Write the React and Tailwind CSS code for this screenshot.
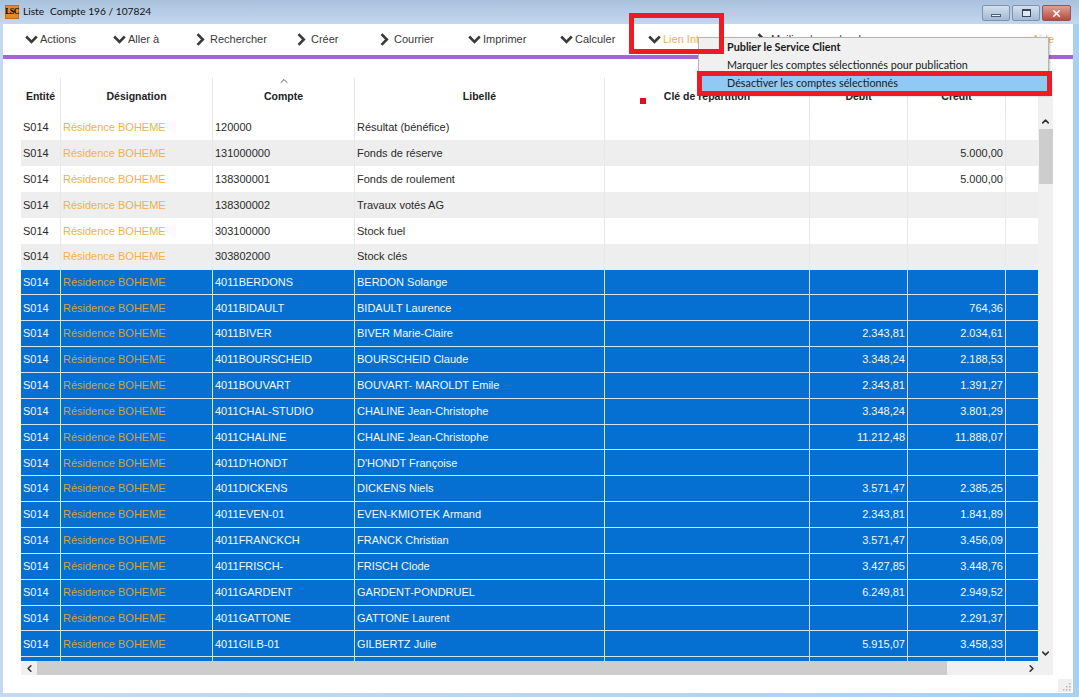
import React from 'react';
import { X, ChevronUp, ChevronDown, ChevronLeft, ChevronRight } from 'lucide-react';

const menus = [
  { label: 'Actions', open: true, w: 'w-[88px]' },
  { label: 'Aller à', open: true, w: 'w-[83px]' },
  { label: 'Rechercher', open: false, w: 'w-[101px]' },
  { label: 'Créer', open: false, w: 'w-[83px]' },
  { label: 'Courrier', open: false, w: 'w-[88px]' },
  { label: 'Imprimer', open: true, w: 'w-[92px]' },
  { label: 'Calculer', open: true, w: 'w-[88px]' },
  { label: 'Lien Int', open: true, w: 'w-[109px]', accent: true },
  { label: 'Mailing / sms / web', open: false, w: 'w-[270px]' },
];

const rows = [
  ['120000', 'Résultat (bénéfice)', '', ''],
  ['131000000', 'Fonds de réserve', '', '5.000,00'],
  ['138300001', 'Fonds de roulement', '', '5.000,00'],
  ['138300002', 'Travaux votés AG', '', ''],
  ['303100000', 'Stock fuel', '', ''],
  ['303802000', 'Stock clés', '', ''],
  ['4011BERDONS', 'BERDON Solange', '', ''],
  ['4011BIDAULT', 'BIDAULT Laurence', '', '764,36'],
  ['4011BIVER', 'BIVER Marie-Claire', '2.343,81', '2.034,61'],
  ['4011BOURSCHEID', 'BOURSCHEID Claude', '3.348,24', '2.188,53'],
  ['4011BOUVART', 'BOUVART- MAROLDT Emile', '2.343,81', '1.391,27'],
  ['4011CHAL-STUDIO', 'CHALINE Jean-Christophe', '3.348,24', '3.801,29'],
  ['4011CHALINE', 'CHALINE Jean-Christophe', '11.212,48', '11.888,07'],
  ["4011D'HONDT", "D'HONDT Françoise", '', ''],
  ['4011DICKENS', 'DICKENS Niels', '3.571,47', '2.385,25'],
  ['4011EVEN-01', 'EVEN-KMIOTEK Armand', '2.343,81', '1.841,89'],
  ['4011FRANCKCH', 'FRANCK Christian', '3.571,47', '3.456,09'],
  ['4011FRISCH-', 'FRISCH Clode', '3.427,85', '3.448,76'],
  ['4011GARDENT', 'GARDENT-PONDRUEL', '6.249,81', '2.949,52'],
  ['4011GATTONE', 'GATTONE Laurent', '', '2.291,37'],
  ['4011GILB-01', 'GILBERTZ Julie', '5.915,07', '3.458,33'],
];

const gridCols = 'grid grid-cols-[40px_152px_142px_250px_205px_98px_98px_32px]';

const DownIcon = () => (
  <svg viewBox="0 0 13 9" className="w-[13px] h-[9px] mr-[2px] shrink-0">
    <polyline points="1.2,1.5 6.5,6.8 11.8,1.5" fill="none" stroke="#3a3a3a" strokeWidth="2.6" />
  </svg>
);

const RightIcon = () => (
  <svg viewBox="0 0 9 13" className="w-[9px] h-[13px] mr-[5px] shrink-0">
    <polyline points="1.5,1.2 6.8,6.5 1.5,11.8" fill="none" stroke="#3a3a3a" strokeWidth="2.6" />
  </svg>
);

const Row = ({ row, index, blank }) => {
  const selected = index >= 6;
  const bg = selected ? 'bg-[#0570d2] text-[#f4f8fc]' : index % 2 === 1 ? 'bg-[#eeeeee] text-[#2a2a2a]' : 'bg-white text-[#2a2a2a]';
  const cell = `flex items-center border-r ${selected ? 'border-[#cfe4f7]' : 'border-[#e8e8e8]'}`;
  return (
    <div className={`${gridCols} h-[25.85px] shrink-0 text-[11px] ${bg} ${selected ? 'border-b border-[#cfe4f7]' : ''}`}>
      <div className={`${cell} pl-[2px]`}>{blank ? '' : 'S014'}</div>
      <div className={`${cell} pl-[2px] ${selected ? 'text-[#d3a23c]' : 'text-[#f5b04a]'}`}>{blank ? '' : 'Résidence BOHEME'}</div>
      <div className={`${cell} pl-[2px]`}>{row[0]}</div>
      <div className={`${cell} pl-[2px]`}>{row[1]}</div>
      <div className={cell}></div>
      <div className={`${cell} justify-end pr-[2px]`}>{row[2]}</div>
      <div className={`${cell} justify-end pr-[2px]`}>{row[3]}</div>
      <div></div>
    </div>
  );
};

const HeadCell = ({ children, className = '' }) => (
  <div className={`flex items-center justify-center border-r border-[#e6e6e6] pt-[1px] font-bold text-[10.5px] text-[#222222] ${className}`}>
    {children}
  </div>
);

export default function App() {
  return (
    <div className="relative w-[1079px] h-[697px] overflow-hidden bg-gradient-to-r from-[#c5daf0] to-[#a9d0f0] font-['Liberation_Sans',Arial,sans-serif]">
      {/* title bar */}
      <div className="flex items-center h-[24px] pl-[5px] bg-gradient-to-b from-[#a9c1dc] to-[#c3d8ee]">
        <div className="flex items-center justify-center w-[14px] h-[14px] bg-[#e8872a] border border-[#c06c1e] text-[8px] tracking-[-0.6px] font-bold text-black font-['Liberation_Serif',serif]">LSC</div>
        <span className="ml-[4px] text-[10.2px] text-[#111111] font-['Lato',sans-serif]">Liste</span>
        <span className="ml-[6px] text-[10.2px] text-[#111111] font-['Lato',sans-serif]">Compte 196 / 107824</span>
        <div className="ml-auto mr-[8px] flex gap-[2px] mt-[2px]">
          <div className="flex items-end justify-center w-[28px] h-[16px] pb-[3px] rounded-[2px] border border-[#7d93ad] bg-gradient-to-b from-[#d3e0ef] to-[#a4bad3]">
            <div className="w-[10px] h-[3px] bg-[#e8eef5] border border-[#4b5f76]"></div>
          </div>
          <div className="flex items-center justify-center w-[28px] h-[16px] rounded-[2px] border border-[#7d93ad] bg-gradient-to-b from-[#d3e0ef] to-[#a4bad3]">
            <div className="w-[9px] h-[8px] border border-[#34475d] border-t-2 bg-[#dfe8f2]"></div>
          </div>
          <div className="flex items-center justify-center w-[29px] h-[16px] rounded-[2px] border border-[#8a5a5a] bg-gradient-to-b from-[#d9a196] to-[#b8493c]">
            <X className="w-[11px] h-[11px] text-white" strokeWidth={3.5} />
          </div>
        </div>
      </div>

      {/* window body */}
      <div className="flex flex-col ml-[3px] mr-[6px] h-[669px] bg-white">
        {/* toolbar */}
        <div className="flex items-center h-[31px] shrink-0 pl-[22px] text-[11px] text-[#3a3a3a]">
          {menus.map((m) => (
            <div key={m.label} className={`flex items-center shrink-0 ${m.w}`}>
              {m.open ? <DownIcon /> : <RightIcon />}
              <span className={m.accent ? 'text-[#f5b04a]' : ''}>{m.label}</span>
            </div>
          ))}
          <span className="ml-[5px] text-[#f5b04a]">Aide</span>
        </div>
        <div className="h-[4px] shrink-0 bg-[#a764d2]"></div>

        {/* table area */}
        <div className="flex flex-col mt-[19px] ml-[18px] mr-[19px]">
          <div className="flex h-[583px]">
            <div className="flex flex-col w-[1017px] overflow-hidden">
              <div className={`${gridCols} h-[36.5px] shrink-0`}>
                <HeadCell>Entité</HeadCell>
                <HeadCell>Désignation</HeadCell>
                <HeadCell className="relative">
                  <ChevronUp className="absolute top-[-3px] left-1/2 -translate-x-1/2 w-[12px] h-[12px] text-[#555555]" strokeWidth={2} />
                  Compte
                </HeadCell>
                <HeadCell>Libellé</HeadCell>
                <HeadCell>Clé de répartition</HeadCell>
                <HeadCell>Débit</HeadCell>
                <HeadCell>Crédit</HeadCell>
                <div></div>
              </div>
              {rows.map((row, i) => (
                <Row key={row[0]} row={row} index={i} />
              ))}
              <Row row={['', '', '', '']} index={21} blank />
            </div>
            {/* vertical scrollbar */}
            <div className="relative flex flex-col w-[15px] bg-[#f0f0f0]">
              <div className="mt-[36px] flex items-center justify-center h-[15px]">
                <ChevronUp className="w-[11px] h-[11px] text-[#333333]" strokeWidth={3.5} />
              </div>
              <div className="w-[14px] h-[55px] ml-[1px] bg-[#cdcdcd]"></div>
              <div className="mt-auto flex items-center justify-center h-[15px]">
                <ChevronDown className="w-[11px] h-[11px] text-[#333333]" strokeWidth={3.5} />
              </div>
            </div>
          </div>
          {/* horizontal scrollbar */}
          <div className="flex items-center h-[14px] w-[1032px] bg-[#f0f0f0]">
            <div className="flex items-center justify-center w-[16px]">
              <ChevronLeft className="w-[11px] h-[11px] text-[#333333]" strokeWidth={3.5} />
            </div>
            <div className="w-[910px] h-full bg-[#cdcdcd]"></div>
            <div className="ml-auto mr-[14px] flex items-center justify-center w-[15px]">
              <ChevronRight className="w-[11px] h-[11px] text-[#333333]" strokeWidth={3.5} />
            </div>
          </div>
        </div>
      </div>

      {/* dropdown menu */}
      <div className="absolute left-[698px] top-[37px] w-[351px] h-[58px] flex flex-col bg-[#f0f0f0] border border-[#b5b5b5] text-[10.8px] text-[#1a1a1a] font-['Lato',sans-serif] shadow-[1px_1px_2px_rgba(0,0,0,0.25)]">
        <div className="flex items-center h-[18px] pl-[28px] font-bold">Publier le Service Client</div>
        <div className="flex items-center h-[18px] pl-[28px]">Marquer les comptes sélectionnés pour publication</div>
        <div className="flex items-center h-[18px] pl-[28px] bg-[#90c8f6]">Désactiver les comptes sélectionnés</div>
      </div>

      {/* red annotations */}
      <div className="absolute left-[629px] top-[13px] w-[95px] h-[41px] border-[5px] border-[#ed1c24]"></div>
      <div className="absolute left-[697px] top-[71px] w-[355px] h-[25px] border-[5px] border-[#ed1c24]"></div>
      <div className="absolute left-[640px] top-[98px] w-[6px] h-[6px] bg-[#d9141c]"></div>

      {/* resize grip */}
      <div className="absolute left-[1058px] top-[679px] flex items-end justify-end w-[14px] h-[13px] bg-[#f0f0f0]">
        <svg viewBox="0 0 10 10" className="w-[10px] h-[10px]">
          <g fill="#b5b5b5">
            <rect x="7" y="1" width="1.5" height="1.5" />
            <rect x="7" y="4" width="1.5" height="1.5" />
            <rect x="4" y="4" width="1.5" height="1.5" />
            <rect x="7" y="7" width="1.5" height="1.5" />
            <rect x="4" y="7" width="1.5" height="1.5" />
            <rect x="1" y="7" width="1.5" height="1.5" />
          </g>
        </svg>
      </div>
    </div>
  );
}
